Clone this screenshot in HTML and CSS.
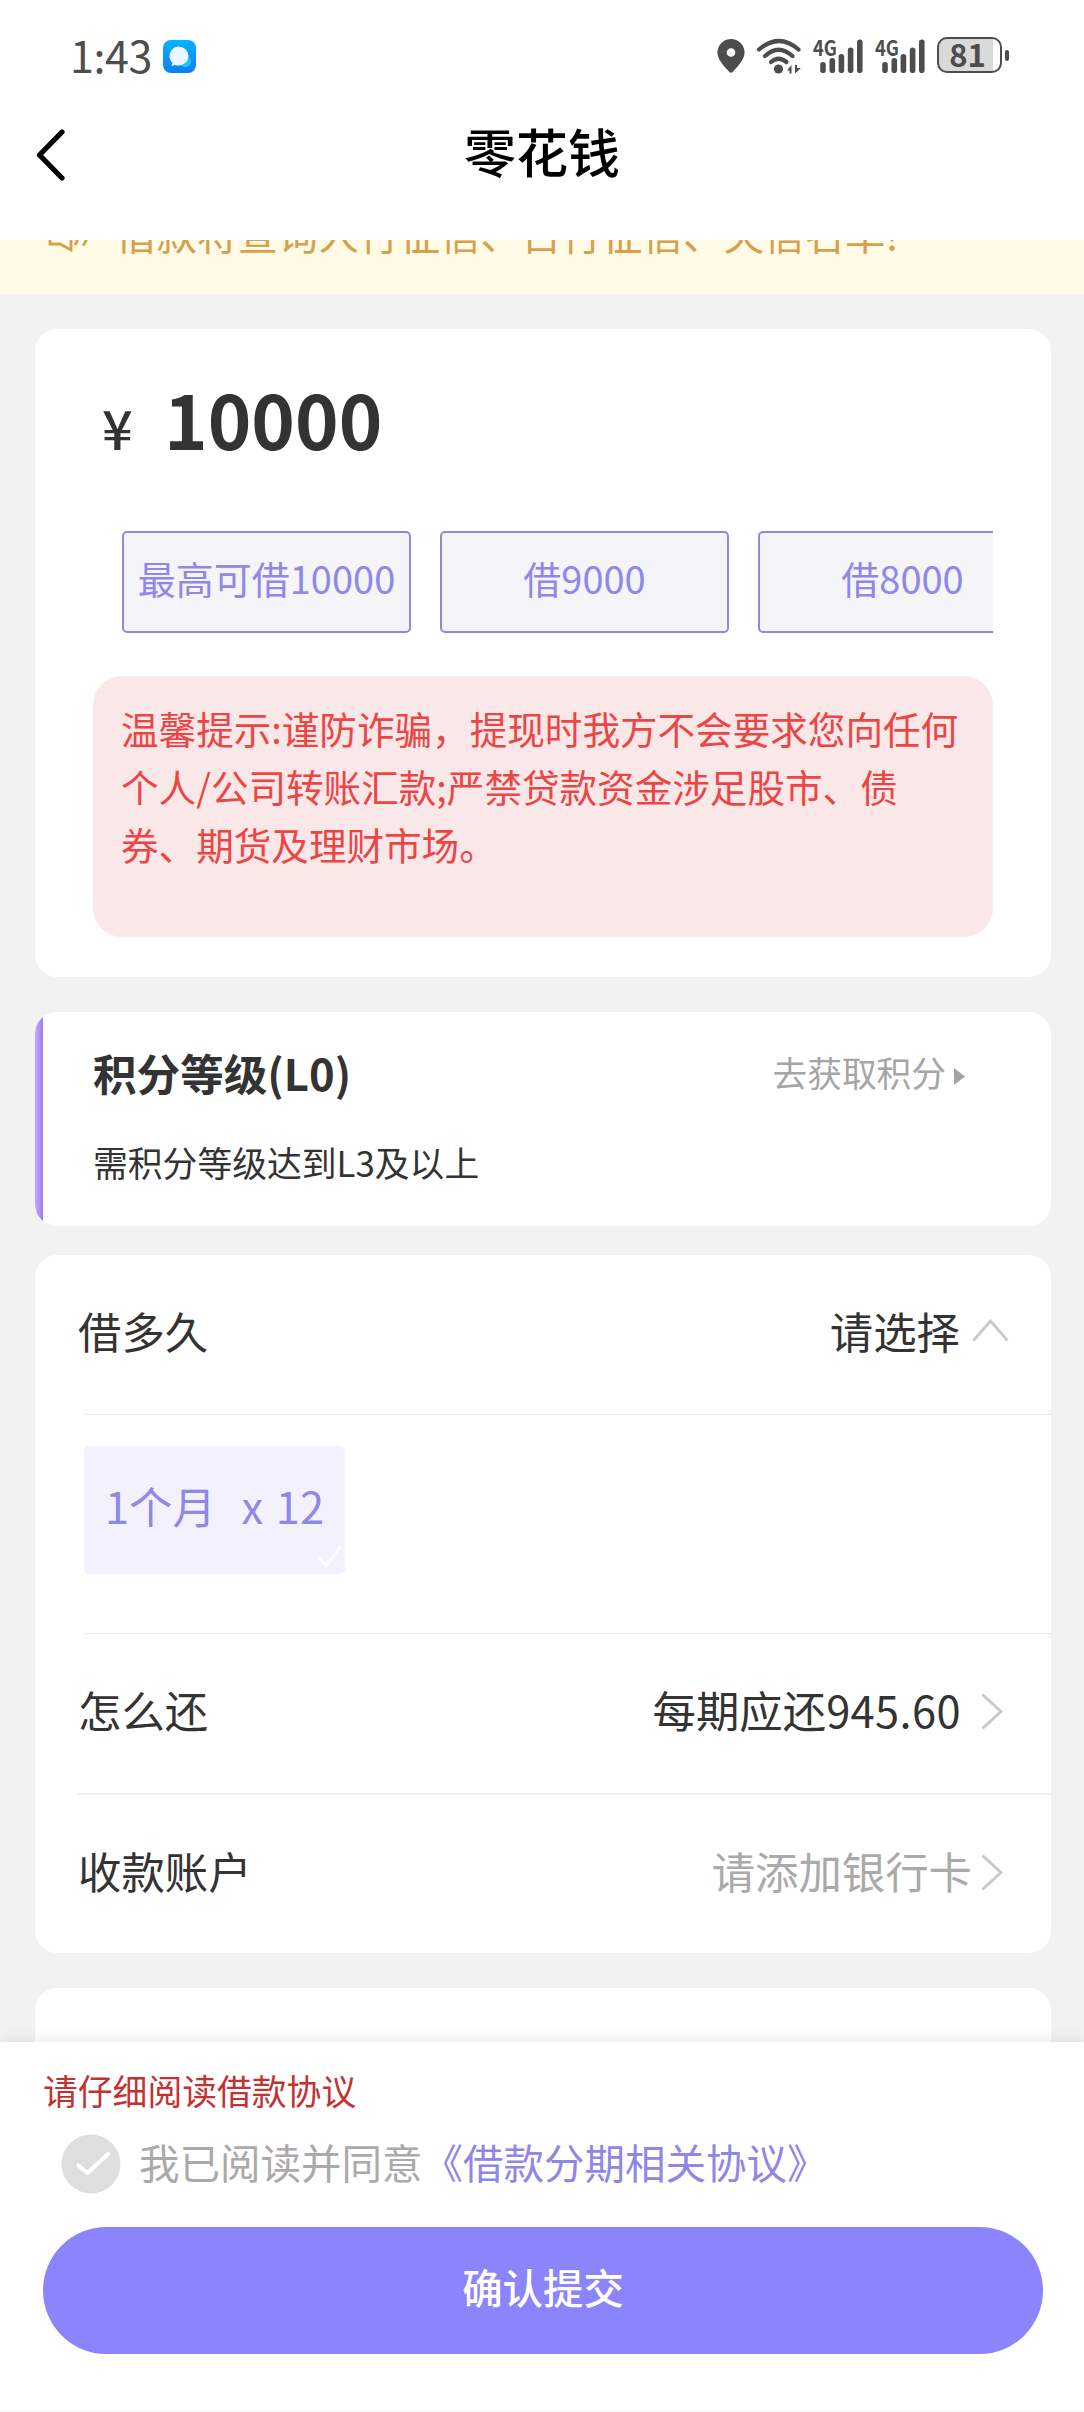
FILE: index.html
```html
<!DOCTYPE html>
<html lang="zh-CN">
<head>
<meta charset="utf-8">
<title>零花钱</title>
<link rel="stylesheet" href="styles.css">
</head>
<body>
<div class="screen">
  <header class="top">
    <div class="status">
      <span class="clock">1:43</span>
      <svg class="app-badge" width="33" height="33" viewBox="0 0 33 33">
        <defs>
          <linearGradient id="badge" x1="0" y1="0" x2="0" y2="1"><stop offset="0" stop-color="#06b2fd"/><stop offset="1" stop-color="#0e7ef4"/></linearGradient>
        </defs>
        <rect width="33" height="33" rx="8" fill="url(#badge)"/>
        <circle cx="22.500" cy="21.500" r="5.500" fill="#22c3f8"/>
        <path d="M15.500 6.500a10 9.500 0 0 1 0 19q-2 0-3.600-.5L8.500 26l1-3.200A9.600 9.500 0 0 1 15.500 6.500z" fill="#eaf7ff"/>
      </svg>
      <div class="indicators">
        <svg class="pin" width="28" height="34" viewBox="0 0 28 34"><path fill-rule="evenodd" d="M14 0a13.600 13.600 0 0 1 13.600 13.600C27.600 21 19 29.500 15.600 33q-1.600 1.300-3.200 0C9 29.500.4 21 .4 13.600A13.600 13.600 0 0 1 14 0zm0 9.200a4.300 4.300 0 1 0 0 8.600 4.300 4.300 0 0 0 0-8.600z" fill="#4d4d4d"/></svg>
        <svg class="wifi" width="46" height="36" viewBox="0 0 46 36">
          <g fill="none" stroke="#4d4d4d" stroke-width="4.200" stroke-linecap="round"><path d="M3 11.500Q23-5.500 42.500 11.500"/><path d="M9 18Q22.500 5.500 36.500 18"/><path d="M15 24Q22.500 17.500 30.500 24"/></g>
          <circle cx="22.500" cy="31" r="4.600" fill="#4d4d4d"/>
          <path d="M31 32.500l4.500-5.500v8.500h-2v-3zM39 35.500v-8.500h2v3h4z" fill="#4d4d4d"/>
        </svg>
        <svg class="signal" width="52" height="38" viewBox="0 0 52 38">
          <text x="0" y="18.500" class="net" textLength="24" lengthAdjust="spacingAndGlyphs">4G</text>
          <g fill="#4d4d4d"><rect x="7.200" y="25" width="5.600" height="11" rx="2.800"/><rect x="16.500" y="21" width="5.600" height="15" rx="2.800"/><rect x="25.600" y="17" width="5.600" height="19" rx="2.800"/><rect x="34.800" y="10.500" width="5.600" height="25.500" rx="2.800"/><rect x="44" y="2.500" width="5.600" height="33.500" rx="2.800"/></g>
        </svg>
        <svg class="signal" width="52" height="38" viewBox="0 0 52 38">
          <text x="0" y="18.500" class="net" textLength="24" lengthAdjust="spacingAndGlyphs">4G</text>
          <g fill="#4d4d4d"><rect x="7.200" y="25" width="5.600" height="11" rx="2.800"/><rect x="16.500" y="21" width="5.600" height="15" rx="2.800"/><rect x="25.600" y="17" width="5.600" height="19" rx="2.800"/><rect x="34.800" y="10.500" width="5.600" height="25.500" rx="2.800"/><rect x="44" y="2.500" width="5.600" height="33.500" rx="2.800"/></g>
        </svg>
        <div class="battery"><span>81</span></div>
        <div class="nub"></div>
      </div>
    </div>
    <div class="nav">
      <svg class="back" width="30" height="52" viewBox="0 0 30 52"><path d="M26 3L3.500 26 26 49" fill="none" stroke="#000" stroke-width="5.200" stroke-linecap="round" stroke-linejoin="round"/></svg>
      <h1>零花钱</h1>
    </div>
  </header>

  <main>
    <div class="notice">
      <svg width="44" height="40" viewBox="0 0 44 40"><path d="M3 12.500h10L24 4v31l-11-6H3zM28 30q5-7 0-16M36 30.500q8-9 0-20" fill="none" stroke="#d7a04c" stroke-width="2.800"/></svg>
      <span>借款将查询人行征信、百行征信、失信名单!</span>
    </div>

    <section class="card loan">
      <div class="amount"><span class="yuan">¥</span><span class="sum">10000</span></div>
      <div class="chips">
        <div class="chip">最高可借10000</div>
        <div class="chip">借9000</div>
        <div class="chip">借8000</div>
      </div>
      <p class="tip">温馨提示:谨防诈骗，提现时我方不会要求您向任何<br>个人/公司转账汇款;严禁贷款资金涉足股市、债<br>券、期货及理财市场。</p>
    </section>

    <section class="card level">
      <div class="level-head">
        <h2>积分等级(L0)</h2>
        <a class="earn">去获取积分<svg width="11" height="17" viewBox="0 0 11 17"><path d="M0 0l11 8.500L0 17z" fill="#a3a3a3"/></svg></a>
      </div>
      <p>需积分等级达到L3及以上</p>
    </section>

    <section class="card details">
      <div class="row term">
        <span>借多久</span>
        <span class="value">请选择<svg class="up" width="37" height="23" viewBox="0 0 37 23"><path d="M1.500 21.500L18.500 2l17 19.500" fill="none" stroke="#c8c8c8" stroke-width="2.800"/></svg></span>
      </div>
      <div class="periods">
        <div class="period"><span>1个月</span><span class="times">x 12</span>
          <svg class="tick" width="26" height="22" viewBox="0 0 26 22"><path d="M1.500 12l9 8.500L24.500 1.500" fill="none" stroke="#fff" stroke-width="2.400"/></svg>
        </div>
      </div>
      <div class="row repay">
        <span>怎么还</span>
        <span class="value">每期应还<span class="num">945.60</span><svg class="next" width="22" height="37" viewBox="0 0 22 37"><path d="M1.500 1.500L20 18.500l-18.500 17" fill="none" stroke="#c8c8c8" stroke-width="2.800"/></svg></span>
      </div>
      <div class="row account">
        <span>收款账户</span>
        <span class="value muted">请添加银行卡<svg class="next" width="22" height="37" viewBox="0 0 22 37"><path d="M1.500 1.500L20 18.500l-18.500 17" fill="none" stroke="#c8c8c8" stroke-width="2.800"/></svg></span>
      </div>
    </section>

    <section class="card more"></section>
  </main>

  <footer class="bottom">
    <p class="warn">请仔细阅读借款协议</p>
    <label class="agree">
      <svg width="60" height="60" viewBox="0 0 60 60"><circle cx="30" cy="30" r="29.500" fill="#dedede"/><path d="M17.500 31.500l9 7.500L47 20" fill="none" stroke="#fff" stroke-width="4.200" stroke-linecap="round" stroke-linejoin="round"/></svg>
      <span>我已阅读并同意<a>《借款分期相关协议》</a></span>
    </label>
    <button class="submit">确认提交</button>
  </footer>
</div>
</body>
</html>
```
FILE: styles.css
```css
* { box-sizing: border-box; }
body {
  margin: 0;
  background: #f2f2f2;
  font-family: "Noto Sans CJK SC", sans-serif;
  color: #333;
}
h1, h2, p { margin: 0; }
svg { display: block; flex: none; }
.screen {
  width: 1084px;
  height: 2412px;
  overflow: hidden;
  display: flex;
  flex-direction: column;
  white-space: nowrap;
}

/* status bar and navigation */
.top {
  position: relative;
  z-index: 1;
  flex: none;
  height: 240px;
  background: #fff;
}
.status {
  height: 74px;
  padding: 37px 75px 0 70px;
  display: flex;
  align-items: flex-start;
  color: #4d4d4d;
}
.clock { width: 93px; margin-top: -3px; font-size: 43px; line-height: 40px; letter-spacing: -0.4px; }
.app-badge { margin-top: 3px; }
.indicators { margin-left: auto; display: flex; }
.pin { margin: 2px 11px 0 0; }
.wifi { margin: 1px 11px 0 0; }
.signal { margin-right: 10px; overflow: visible; }
.net { font-size: 21.5px; font-weight: 700; fill: #4d4d4d; }
.battery {
  width: 65px;
  height: 36px;
  border: 2.5px solid #4d4d4d;
  border-radius: 10px;
  background: linear-gradient(90deg, #d9d9d9 54px, #fff 54px);
  font-size: 31px;
  font-weight: 700;
  line-height: 29px;
  text-align: center;
}
.battery span { margin-right: 4px; }
.nub { width: 4px; height: 11px; margin: 13px 0 0 3px; border-radius: 2px; background: #4d4d4d; }
.nav {
  height: 166px;
  display: grid;
  grid-template-columns: 70px 1fr 70px;
}
.back { margin: 55px 0 0 36px; }
.nav h1 {
  padding-top: 47px;
  text-align: center;
  font-size: 52px;
  line-height: 60px;
  font-weight: 500;
  color: #000;
}

main { flex: none; height: 1802px; overflow: hidden; }
.notice {
  height: 106px;
  margin-top: -52px;
  padding: 0 0 18px 47px;
  display: flex;
  align-items: center;
  gap: 25px;
  background: #fffbe6;
  color: #d7a04c;
  font-size: 40.5px;
}
.notice svg { margin-top: 6px; }

.card { margin: 0 33px 0 35px; border-radius: 22px; background: #fff; }

/* amount */
.loan { height: 648px; margin-top: 35px; padding: 0 58px; }
.amount { height: 202px; display: flex; align-items: baseline; line-height: 177px; }
.yuan { width: 71px; padding-left: 9px; font-size: 54px; font-weight: 500; }
.sum { font-size: 74px; font-weight: 700; }
.chips { padding-left: 29px; display: flex; gap: 29px; overflow: hidden; }
.chip {
  flex: none;
  width: 289px;
  height: 102px;
  border: 2px solid #9089d6;
  border-radius: 5px;
  background: #f4f5f9;
  color: #9088e8;
  font-size: 38px;
  line-height: 89px;
  text-align: center;
}
.tip {
  height: 261px;
  margin-top: 43px;
  padding: 23px 0 0 28px;
  border-radius: 29px;
  background: #fae7e8;
  color: #ec4546;
  font-size: 37.6px;
  line-height: 58px;
}

/* level */
.level {
  height: 214px;
  margin-top: 35px;
  padding: 29px 86px 0 58px;
  background: linear-gradient(90deg, #cba6fb, #977fee 8px, #fff 8px);
}
.level-head { display: flex; justify-content: space-between; align-items: center; height: 62px; }
.level h2 { font-size: 43.6px; font-weight: 700; }
.earn { display: flex; align-items: center; gap: 8px; font-size: 34.7px; color: #a5a5a5; }
.earn svg { margin-top: 9px; }
.level p { margin-top: 33px; font-size: 34.8px; line-height: 52px; }

/* loan details */
.details { height: 698px; margin-top: 29px; font-size: 43.4px; }
.row { display: flex; justify-content: space-between; align-items: center; margin-left: 42px; padding: 0 42px 0 1px; }
.term { height: 159px; padding-bottom: 9px; }
.value { display: flex; align-items: center; }
.num { letter-spacing: 0.4px; }
.muted { color: #aaa; }
.up { margin-left: 12px; }
.next { margin: 5px 6px 0 9px; }
.repay .next { margin-left: 20px; }
.periods {
  height: 220px;
  margin-left: 49px;
  padding-top: 31px;
  border: solid #e6e6e6;
  border-width: 1px 0;
}
.period {
  position: relative;
  width: 261px;
  height: 128px;
  padding: 0 21px;
  display: flex;
  justify-content: space-between;
  border-radius: 5px;
  background: #f2f1fe;
  color: #9088e8;
  line-height: 119px;
}
.times { word-spacing: 3px; }
.tick { position: absolute; right: 3px; bottom: 7px; }
.repay { height: 161px; padding-bottom: 9px; border-bottom: 2px solid #f2f2f2; }
.account { height: 158px; padding-bottom: 8px; }
.more { height: 100px; margin-top: 35px; }

/* footer */
.bottom {
  position: relative;
  flex: none;
  height: 370px;
  padding: 22px 41px 0 43px;
  border-bottom: 1px solid #f5f5f5;
  background: #fff;
  box-shadow: 0 0 16px rgba(0, 0, 0, 0.11);
}
.warn { font-size: 34.8px; line-height: 52px; color: #c33233; }
.agree {
  height: 60px;
  margin-top: 18px;
  padding-left: 18px;
  display: flex;
  align-items: center;
  gap: 18px;
  font-size: 40.5px;
  color: #aaa;
}
.agree span { padding-bottom: 5px; }
.agree a { color: #8f87e8; }
.submit {
  display: block;
  width: 1000px;
  height: 127px;
  margin-top: 33px;
  padding: 0 0 8px;
  border: 0;
  border-radius: 64px;
  background: #8b84fc;
  color: #fff;
  font: 500 40.4px "Noto Sans CJK SC", sans-serif;
}
```
